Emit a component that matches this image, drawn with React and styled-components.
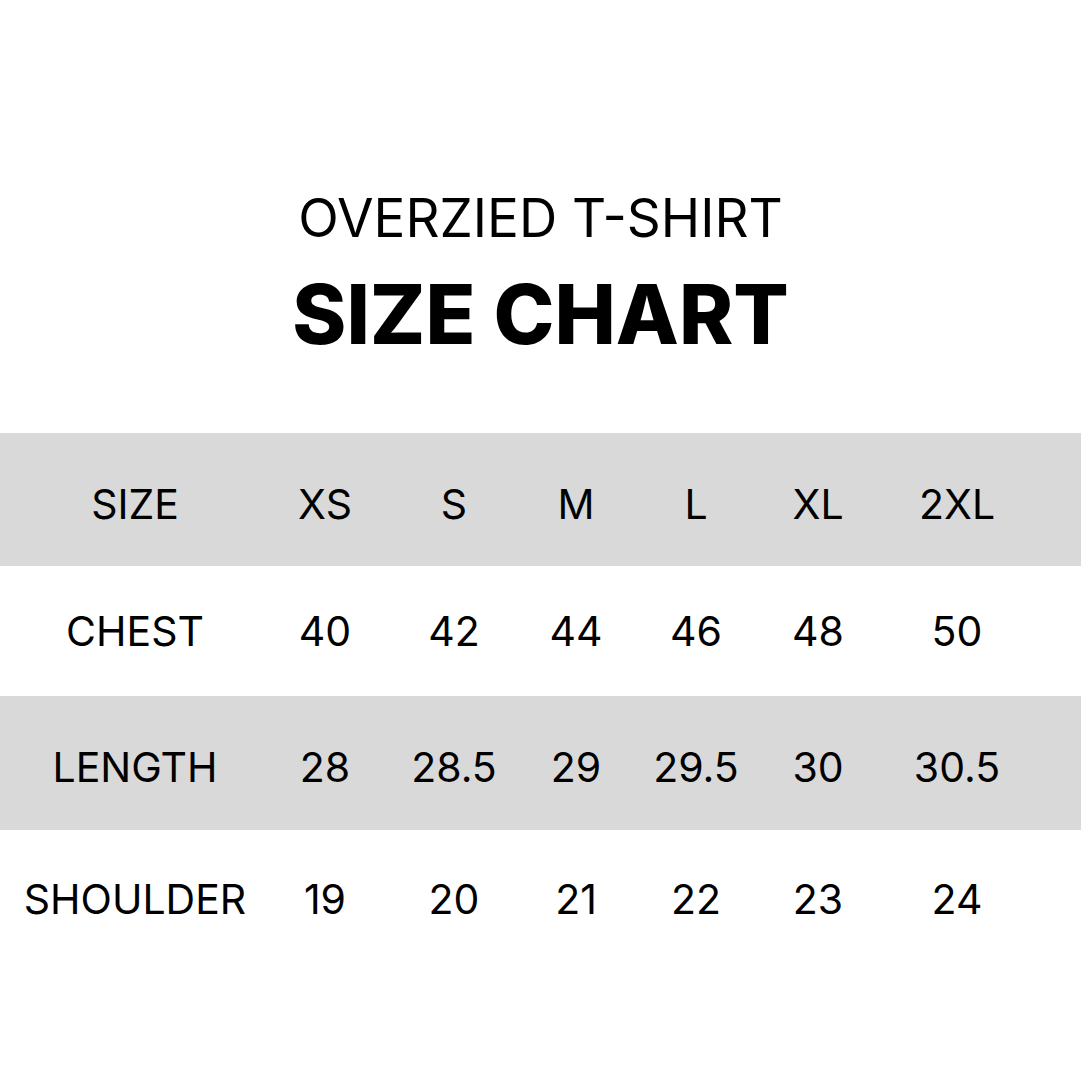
import React from 'react';
import styled, { createGlobalStyle } from 'styled-components';

const GlobalStyle = createGlobalStyle`
  html, body {
    margin: 0;
    padding: 0;
    background: #ffffff;
  }
  body {
    font-family: Inter, "Liberation Sans", sans-serif;
    color: #000000;
  }
`;

const Page = styled.div`
  width: 1081px;
  height: 1080px;
  background: #ffffff;
  display: flex;
  flex-direction: column;
  overflow: hidden;
`;

const Heading = styled.header`
  display: flex;
  flex-direction: column;
  align-items: center;
  padding-top: 188px;
  height: 245px;
`;

const Subtitle = styled.div`
  font-size: 53px;
  font-weight: 400;
  line-height: 60px;
  letter-spacing: 0;
`;

const Title = styled.h1`
  margin: 24px 0 0;
  font-size: 82px;
  font-weight: 800;
  line-height: 86px;
  letter-spacing: 0;
`;

const Table = styled.div`
  display: grid;
  grid-template-columns: 270px 110px 148px 96px 144px 100px 178px 1fr;
`;

const Row = styled.div`
  display: contents;
`;

const Cell = styled.div`
  height: ${p => p.$h}px;
  background: ${p => (p.$shade ? '#d9d9d9' : '#ffffff')};
  display: flex;
  align-items: center;
  justify-content: center;
  padding-top: ${p => p.$shift || 0}px;
  box-sizing: border-box;
  font-size: 41px;
  font-weight: 400;
  white-space: nowrap;
`;

const rows = [
  { cells: ['SIZE', 'XS', 'S', 'M', 'L', 'XL', '2XL'], h: 133, shade: true, shift: 8 },
  { cells: ['CHEST', '40', '42', '44', '46', '48', '50'], h: 130, shade: false, shift: 0 },
  { cells: ['LENGTH', '28', '28.5', '29', '29.5', '30', '30.5'], h: 134, shade: true, shift: 8 },
  { cells: ['SHOULDER', '19', '20', '21', '22', '23', '24'], h: 134, shade: false, shift: 4 },
];

export default function App() {
  return (
    <Page>
      <GlobalStyle />
      <Heading>
        <Subtitle>OVERZIED T-SHIRT</Subtitle>
        <Title>SIZE CHART</Title>
      </Heading>
      <Table>
        {rows.map((r, i) => (
          <Row key={i}>
            {r.cells.map((c, j) => (
              <Cell key={j} $h={r.h} $shade={r.shade} $shift={r.shift}>{c}</Cell>
            ))}
            <Cell $h={r.h} $shade={r.shade} />
          </Row>
        ))}
      </Table>
    </Page>
  );
}
